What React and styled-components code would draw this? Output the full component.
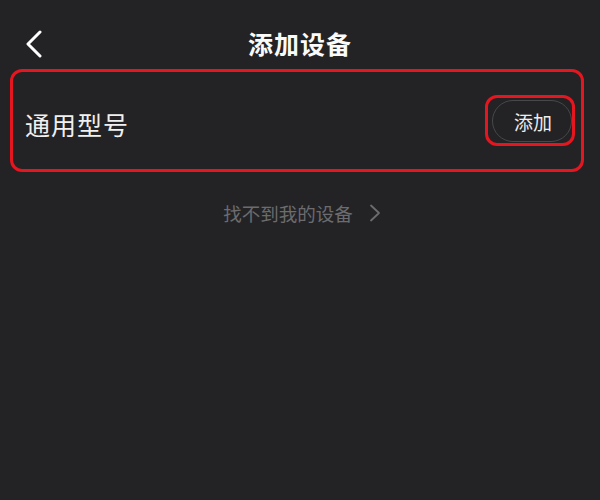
import React from 'react';
import styled, { createGlobalStyle } from 'styled-components';

const GlobalStyle = createGlobalStyle`
	html, body {
		margin: 0;
		padding: 0;
		background: #232326;
	}
	body {
		font-family: 'Noto Sans CJK SC', 'Noto Sans', sans-serif;
		color: #f2f2f2;
	}
`;

const Page = styled.div`
	width: 600px;
	height: 500px;
	background: #232326;
	overflow: hidden;
`;

const Header = styled.header`
	display: grid;
	grid-template-columns: 60px 1fr 60px;
	align-items: center;
	height: 50px;
	padding-top: 19px;
	box-sizing: content-box;
`;

const BackButton = styled.button`
	display: flex;
	align-items: center;
	justify-content: flex-start;
	padding: 0 0 0 24px;
	border: none;
	background: none;
	color: #fff;
	cursor: pointer;
`;

const Title = styled.h1`
	margin: 0 0 2px;
	text-align: center;
	font-size: 25px;
	font-weight: 700;
	letter-spacing: 1px;
	color: #fafafa;
`;

const Card = styled.div`
	display: flex;
	align-items: center;
	justify-content: space-between;
	box-sizing: border-box;
	height: 103px;
	margin: 0 16px 0 10px;
	padding: 0 6px 0 12px;
	border: ${({ outlined }) => (outlined ? '3px solid #e5161f' : 'none')};
	border-radius: 12px;
`;

const ModelName = styled.span`
	margin-top: 7px;
	font-size: 25px;
	letter-spacing: 1px;
	color: #f0f0f0;
`;

const ButtonFrame = styled.div`
	display: flex;
	align-items: flex-end;
	justify-content: flex-end;
	box-sizing: border-box;
	width: 90px;
	height: 51px;
	padding-bottom: 1px;
	border: ${({ outlined }) => (outlined ? '3px solid #e5161f' : 'none')};
	border-radius: 12px;
`;

const AddButton = styled.button`
	width: 80px;
	height: 42px;
	padding: 0 0 0 2px;
	border: 1.5px solid #48484b;
	border-radius: 21px;
	background: transparent;
	font-family: inherit;
	font-size: 19px;
	color: #ededed;
	cursor: pointer;
`;

const HelpLink = styled.a`
	display: flex;
	align-items: center;
	justify-content: center;
	gap: 16px;
	margin: 28px 0 0 4px;
	font-size: 18.5px;
	color: #6c6c6e;
	text-decoration: none;
	cursor: pointer;
`;

const App = () => (
	<Page>
		<GlobalStyle />
		<Header>
			<BackButton aria-label='返回'>
				<svg width='20' height='28' viewBox='0 0 20 28'>
					<path
						d='M16 2 L4 14 L16 26'
						fill='none'
						stroke='#fff'
						strokeWidth='3'
						strokeLinecap='round'
						strokeLinejoin='round'
					/>
				</svg>
			</BackButton>
			<Title>添加设备</Title>
			<span />
		</Header>
		<Card outlined>
			<ModelName>通用型号</ModelName>
			<ButtonFrame outlined>
				<AddButton>添加</AddButton>
			</ButtonFrame>
		</Card>
		<HelpLink>
			<span>找不到我的设备</span>
			<svg width='12' height='18' viewBox='0 0 12 18'>
				<path
					d='M2 1.5 L10 9 L2 16.5'
					fill='none'
					stroke='#6c6c6e'
					strokeWidth='1.8'
					strokeLinecap='round'
					strokeLinejoin='round'
				/>
			</svg>
		</HelpLink>
	</Page>
);

export default App;
